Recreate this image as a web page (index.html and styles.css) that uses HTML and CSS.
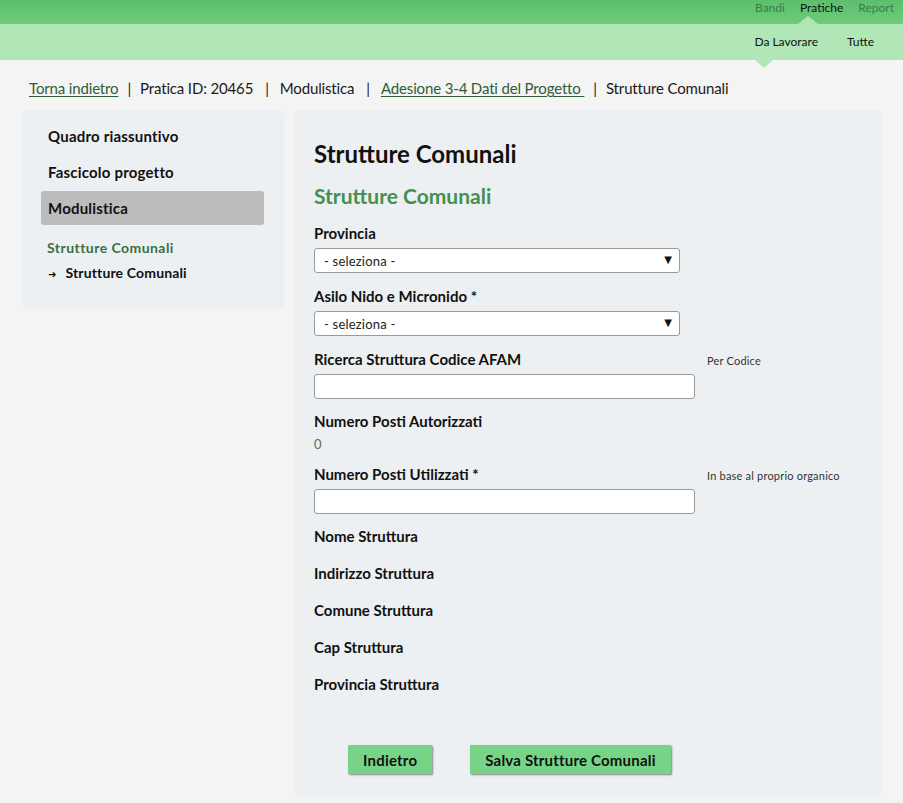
FILE: index.html
```html
<!DOCTYPE html>
<html lang="it">
<head>
<meta charset="utf-8">
<title>Strutture Comunali</title>
<link rel="stylesheet" href="styles.css">
</head>
<body>
<header class="header">
  <nav class="topnav">
    <a class="topnav-item">Bandi</a>
    <a class="topnav-item active">Pratiche</a>
    <a class="topnav-item">Report</a>
  </nav>
  <nav class="subnav">
    <a class="subnav-item active">Da Lavorare</a>
    <a class="subnav-item">Tutte</a>
  </nav>
</header>

<div class="breadcrumb">
  <a class="crumb-link">Torna indietro</a><span class="sep">|</span><span>Pratica ID: 20465</span><span class="sep sep-wide">|</span><span>Modulistica</span><span class="sep sep-wide">|</span><a class="crumb-link">Adesione 3-4 Dati del Progetto&nbsp;</a><span class="sep">|</span><span>Strutture Comunali</span>
</div>

<div class="layout">
  <aside class="sidebar">
    <div class="side-item">Quadro riassuntivo</div>
    <div class="side-item">Fascicolo progetto</div>
    <div class="side-item selected">Modulistica</div>
    <div class="side-group">Strutture Comunali</div>
    <div class="side-sub"><span class="arrow">&#10140;</span>Strutture Comunali</div>
  </aside>

  <main class="main">
    <h1 class="title">Strutture Comunali</h1>
    <h2 class="subtitle">Strutture Comunali</h2>

    <div class="field">
      <div class="label">Provincia</div>
      <div class="control">
        <span class="select-wrap"><select class="select"><option>- seleziona -</option></select></span>
      </div>
    </div>

    <div class="field">
      <div class="label">Asilo Nido e Micronido *</div>
      <div class="control">
        <span class="select-wrap"><select class="select"><option>- seleziona -</option></select></span>
      </div>
    </div>

    <div class="field field-hint">
      <div class="label">Ricerca Struttura Codice AFAM</div>
      <div class="hint">Per Codice</div>
      <div class="control"><input class="input" type="text"></div>
    </div>

    <div class="field field-value">
      <div class="label">Numero Posti Autorizzati</div>
      <div class="value">0</div>
    </div>

    <div class="field field-hint">
      <div class="label">Numero Posti Utilizzati *</div>
      <div class="hint">In base al proprio organico</div>
      <div class="control"><input class="input" type="text"></div>
    </div>

    <div class="static-list">
      <div class="static">Nome Struttura</div>
      <div class="static">Indirizzo Struttura</div>
      <div class="static">Comune Struttura</div>
      <div class="static">Cap Struttura</div>
      <div class="static">Provincia Struttura</div>
    </div>

    <div class="actions">
      <button class="btn">Indietro</button>
      <button class="btn">Salva Strutture Comunali</button>
    </div>
  </main>
</div>
</body>
</html>
```
FILE: styles.css
```css
* { box-sizing: border-box; }

html, body {
  margin: 0;
  padding: 0;
}

body {
  background: #f4f4f4;
  font-family: Lato, "Open Sans", sans-serif;
  color: #111;
  width: 903px;
  height: 803px;
  overflow: hidden;
}

/* Header */
.header {
  position: relative;
}

.topnav {
  height: 24px;
  background: linear-gradient(#5cbf6c, #6ccb7c);
  display: flex;
  justify-content: flex-end;
  align-items: flex-start;
  gap: 15px;
  padding-right: 9px;
}

.topnav-item {
  font-size: 12px;
  line-height: normal;
  color: #3b7d47;
  position: relative;
}

.topnav-item.active {
  color: #111;
}

.topnav-item.active::after {
  content: "";
  position: absolute;
  left: -2px;
  top: 16px;
  border-left: 10px solid transparent;
  border-right: 10px solid transparent;
  border-bottom: 8px solid #b1e7b6;
}

.subnav {
  height: 36px;
  background: #b1e7b6;
  display: flex;
  justify-content: flex-end;
  align-items: center;
  gap: 29px;
  padding-right: 29px;
}

.subnav-item {
  font-size: 12px;
  line-height: 16px;
  color: #111;
  position: relative;
}

.subnav-item.active::after {
  content: "";
  position: absolute;
  left: 1px;
  top: 26px;
  border-left: 9px solid transparent;
  border-right: 9px solid transparent;
  border-top: 8px solid #b1e7b6;
}

/* Breadcrumb */
.breadcrumb {
  margin: 18px 0 0 29px;
  font-size: 15px;
  line-height: 20px;
  letter-spacing: -0.15px;
  color: #1a1a1a;
  white-space: nowrap;
}

.crumb-link {
  color: #2e5e38;
  text-decoration: underline;
  text-underline-offset: 2px;
}

.sep {
  margin: 0 9px 0 9px;
}

.sep-wide {
  margin: 0 11px 0 12px;
}

/* Layout */
.layout {
  display: flex;
  align-items: flex-start;
  gap: 11px;
  margin: 12px 21px 0 22px;
}

.sidebar {
  width: 262px;
  flex: none;
  background: #edf0f2;
  border-radius: 4px;
  padding: 9px 20px 24px 19px;
}

.side-item {
  font-size: 15px;
  font-weight: 700;
  line-height: 20px;
  letter-spacing: 0.2px;
  padding: 7px 7px;
  margin-bottom: 2px;
  color: #111;
}

.side-item.selected {
  background: #bcbcbc;
  border-radius: 3px;
  margin-bottom: 0;
}

.side-group {
  margin-top: 14px;
  padding-left: 6px;
  font-size: 14px;
  font-weight: 700;
  line-height: 18px;
  letter-spacing: 0.45px;
  color: #3b6e46;
}

.side-sub {
  margin-top: 7px;
  padding-left: 7px;
  font-size: 14px;
  font-weight: 700;
  line-height: 18px;
  letter-spacing: 0.15px;
  color: #111;
}

.arrow {
  display: inline-block;
  font-size: 10px;
  letter-spacing: 0;
  margin-right: 9px;
  font-family: "DejaVu Sans", sans-serif;
}

.main {
  flex: 1;
  height: 687px;
  background: #edf0f2;
  border-radius: 4px;
  padding: 29px 19px 23px 19px;
}

.title {
  margin: 0;
  font-size: 24px;
  font-weight: 700;
  line-height: 30px;
  color: #111;
}

.subtitle {
  margin: 14px 0 14px 0;
  font-size: 21px;
  font-weight: 700;
  line-height: 26px;
  color: #44904f;
}

.field {
  display: grid;
  grid-template-columns: 381px auto;
  column-gap: 12px;
  margin-bottom: 13px;
}

.field-hint {
  margin-bottom: 12px;
}

.field-value {
  margin-bottom: 10px;
}

.label {
  grid-column: 1;
  font-size: 15px;
  font-weight: 700;
  line-height: 20px;
  margin-bottom: 5px;
  color: #111;
  white-space: nowrap;
}

.hint {
  grid-column: 2;
  grid-row: 1;
  font-size: 11px;
  line-height: 14px;
  letter-spacing: 0.2px;
  padding-top: 5px;
  color: #333;
}

.control {
  grid-column: 1;
}

.value {
  grid-column: 1;
  font-size: 13px;
  line-height: 20px;
  margin-top: -2px;
  color: #666;
}

.select-wrap {
  position: relative;
  display: block;
  width: 366px;
}

.select-wrap::after {
  content: "\25BC";
  position: absolute;
  right: 8px;
  top: 6px;
  font-size: 10px;
  line-height: 12px;
  color: #111;
  pointer-events: none;
  font-family: "DejaVu Sans", sans-serif;
}

.select {
  appearance: none;
  -webkit-appearance: none;
  display: block;
  width: 366px;
  height: 25px;
  border: 1px solid #9a9a9a;
  border-radius: 3px;
  background: #fff;
  padding: 0 0 0 9px;
  font-family: Lato, sans-serif;
  font-size: 13px;
  letter-spacing: 0.2px;
  color: #222;
}

.input {
  display: block;
  width: 381px;
  height: 25px;
  border: 1px solid #9a9a9a;
  border-radius: 3px;
  background: #fff;
  padding: 0 8px;
  font-family: Lato, sans-serif;
  font-size: 13px;
}

.static-list {
  display: flex;
  flex-direction: column;
  gap: 17px;
}

.static {
  font-size: 15px;
  font-weight: 700;
  line-height: 20px;
  color: #111;
}

.actions {
  display: flex;
  gap: 38px;
  margin-top: 51px;
  padding-left: 34px;
}

.btn {
  height: 29px;
  border: none;
  background: #77d487;
  font-family: Lato, sans-serif;
  font-size: 15px;
  font-weight: 700;
  letter-spacing: 0.2px;
  color: #111;
  padding: 0 15px;
  border-radius: 1px;
  box-shadow: 1px 1px 2px rgba(0, 0, 0, 0.45);
  cursor: pointer;
}
```
